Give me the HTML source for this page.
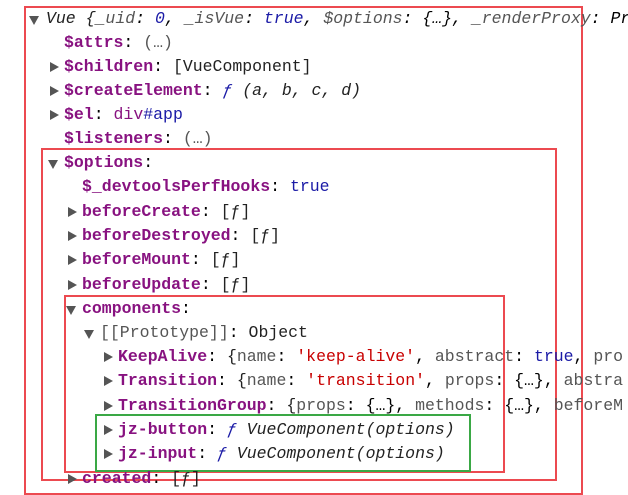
<!DOCTYPE html>
<html><head><meta charset="utf-8"><style>
body{margin:0;width:628px;height:495px;background:#fff;overflow:hidden;position:relative;font-family:"Liberation Mono",monospace;font-size:16.5px;}
.l{position:absolute;white-space:nowrap;height:24px;line-height:24px;margin-top:1px}
.k{color:#881280;font-weight:bold}
.v{color:#1a1aa6}
.g{color:#555}
.s{color:#c80000}
.t{color:#222}
.i{font-style:italic}
.tri{position:absolute;width:0;height:0;margin-top:1px}
.r{border-left:9px solid #555;border-top:5px solid transparent;border-bottom:5px solid transparent;}
.d{border-top:9px solid #555;border-left:5px solid transparent;border-right:5px solid transparent;}
.box{position:absolute;border:2px solid #ec4a50;}
.gb{position:absolute;border:2px solid #3aa845;}
</style></head><body>
<div class="box" style="left:24px;top:6px;width:555px;height:485px"></div>
<div class="box" style="left:41px;top:148px;width:512px;height:329px"></div>
<div class="box" style="left:64px;top:295px;width:437px;height:174px"></div>
<div class="gb" style="left:95px;top:414px;width:372px;height:54px"></div>

<div class="tri d" style="left:29px;top:15px"></div>
<div class="l i" style="left:46px;top:6px"><span class="t">Vue {</span><span class="g">_uid</span>: <span class="v">0</span>, <span class="g">_isVue</span>: <span class="v">true</span>, <span class="g">$options</span>: {…}, <span class="g">_renderProxy</span>: Pr</div>
<div class="l" style="left:64px;top:30px"><span class="k">$attrs</span>: <span class="g">(…)</span></div>
<div class="tri r" style="left:50px;top:61px"></div>
<div class="l" style="left:64px;top:54px"><span class="k">$children</span>: <span class="t">[VueComponent]</span></div>
<div class="tri r" style="left:50px;top:85px"></div>
<div class="l" style="left:64px;top:78px"><span class="k">$createElement</span>: <span class="v i">ƒ</span> <span class="i t">(a, b, c, d)</span></div>
<div class="tri r" style="left:50px;top:109px"></div>
<div class="l" style="left:64px;top:102px"><span class="k">$el</span>: <span style="color:#881280">div</span><span class="v">#app</span></div>
<div class="l" style="left:64px;top:126px"><span class="k">$listeners</span>: <span class="g">(…)</span></div>
<div class="tri d" style="left:48px;top:159px"></div>
<div class="l" style="left:64px;top:150px"><span class="k">$options</span>:</div>
<div class="l" style="left:82px;top:174px"><span class="k">$_devtoolsPerfHooks</span>: <span class="v">true</span></div>
<div class="tri r" style="left:68px;top:206px"></div>
<div class="l" style="left:82px;top:199px"><span class="k">beforeCreate</span>: <span class="t">[ƒ]</span></div>
<div class="tri r" style="left:68px;top:230px"></div>
<div class="l" style="left:82px;top:223px"><span class="k">beforeDestroyed</span>: <span class="t">[ƒ]</span></div>
<div class="tri r" style="left:68px;top:254px"></div>
<div class="l" style="left:82px;top:247px"><span class="k">beforeMount</span>: <span class="t">[ƒ]</span></div>
<div class="tri r" style="left:68px;top:279px"></div>
<div class="l" style="left:82px;top:272px"><span class="k">beforeUpdate</span>: <span class="t">[ƒ]</span></div>
<div class="tri d" style="left:66px;top:305px"></div>
<div class="l" style="left:82px;top:296px"><span class="k">components</span>:</div>
<div class="tri d" style="left:84px;top:329px"></div>
<div class="l" style="left:100px;top:320px"><span class="g">[[Prototype]]</span>: <span class="t">Object</span></div>
<div class="tri r" style="left:104px;top:351px"></div>
<div class="l" style="left:118px;top:344px"><span class="k">KeepAlive</span>: <span class="t">{</span><span class="g">name</span>: <span class="s">'keep-alive'</span>, <span class="g">abstract</span>: <span class="v">true</span>, <span class="g">pro</span></div>
<div class="tri r" style="left:104px;top:375px"></div>
<div class="l" style="left:118px;top:368px"><span class="k">Transition</span>: <span class="t">{</span><span class="g">name</span>: <span class="s">'transition'</span>, <span class="g">props</span>: {…}, <span class="g">abstra</span></div>
<div class="tri r" style="left:104px;top:400px"></div>
<div class="l" style="left:118px;top:393px"><span class="k">TransitionGroup</span>: <span class="t">{</span><span class="g">props</span>: {…}, <span class="g">methods</span>: {…}, <span class="g">beforeM</span></div>
<div class="tri r" style="left:104px;top:424px"></div>
<div class="l" style="left:118px;top:417px"><span class="k">jz-button</span>: <span class="v i">ƒ</span> <span class="i t">VueComponent(options)</span></div>
<div class="tri r" style="left:104px;top:448px"></div>
<div class="l" style="left:118px;top:441px"><span class="k">jz-input</span>: <span class="v i">ƒ</span> <span class="i t">VueComponent(options)</span></div>
<div class="tri r" style="left:68px;top:473px"></div>
<div class="l" style="left:82px;top:466px"><span class="k">created</span>: <span class="t">[ƒ]</span></div>
</body></html>
